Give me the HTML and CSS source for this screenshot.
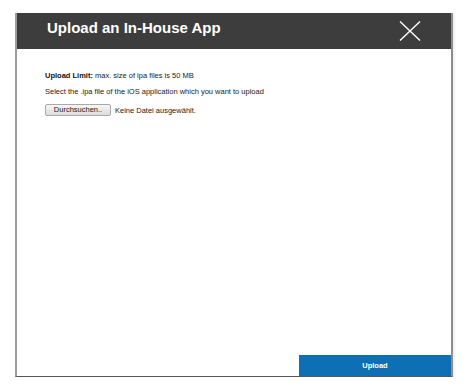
FILE: index.html
```html
<!DOCTYPE html>
<html lang="en">
<head>
    <meta charset="UTF-8">
    <title>Upload an In-House App</title>
    <link rel="stylesheet" href="styles.css">
</head>
<body>
<div class="dialog">
    <div class="dialog-head">
        <h1 class="dialog-title">Upload an In-House App</h1>
        <span class="close">
            <svg width="22" height="20" viewBox="0 0 22 20">
                <path d="M1 0.5 L21 19.5 M21 0.5 L1 19.5" stroke="#fff" stroke-width="1.4" fill="none"/>
            </svg>
        </span>
    </div>
    <div class="dialog-body">
        <p class="line"><b>Upload Limit:</b> max. size of ipa files is 50 MB</p>
        <p class="line">Select the .ipa file of the iOS application which you want to upload</p>
        <div class="file-row">
            <span class="file-btn">Durchsuchen..</span>
            <span class="file-name">Keine Datei ausgewählt.</span>
        </div>
    </div>
    <div class="dialog-foot">
        <span class="upload">Upload</span>
    </div>
</div>
</body>
</html>
```

FILE: styles.css
```css
* {
    margin: 0;
    padding: 0
}

body {
    background: #fff;
    font-family: "Liberation Sans", Arial, sans-serif;
}

.dialog {
    width: 434px;
    height: 363px;
    margin: 13px 0 0 15px;
    border-left: 2px solid #9c9c9c;
    border-right: 2px solid #8e8e8e;
    border-bottom: 1px solid #555;
    display: flex;
    flex-direction: column;
    background: #fff;
    box-shadow: 2px 1px 2px rgba(0, 0, 0, .06);
}

.dialog-head {
    height: 36px;
    background-color: #3d3d3d;
    display: flex;
    justify-content: space-between;
    align-items: flex-start;
    padding: 0 30px;
}

.dialog-title {
    color: #fff;
    font-size: 15px;
    font-weight: bold;
    line-height: 30px;
}

.close {
    display: block;
    margin-top: 8px;
    height: 20px;
}

.close svg {
    display: block;
}

.dialog-body {
    flex: 1;
    padding: 19px 28px 0;
    font-size: 7.5px;
    color: #222;
}

.line {
    line-height: 16px;
}

.line b {
    color: #111;
}

.file-row {
    display: flex;
    align-items: center;
    gap: 4px;
    height: 16px;
    margin-top: 2px;
}

.file-btn {
    display: inline-block;
    width: 66px;
    height: 12px;
    line-height: 10px;
    box-sizing: border-box;
    text-align: center;
    border: 1px solid #a9a9a9;
    border-radius: 2px;
    background: linear-gradient(#f6f6f6, #dcdcdc);
    color: #222;
}

.dialog-foot {
    display: flex;
    justify-content: flex-end;
}

.upload {
    display: block;
    width: 152px;
    height: 21px;
    line-height: 21px;
    background-color: #0f6fb5;
    color: #fff;
    font-size: 7.5px;
    font-weight: bold;
    text-align: center;
}
```
